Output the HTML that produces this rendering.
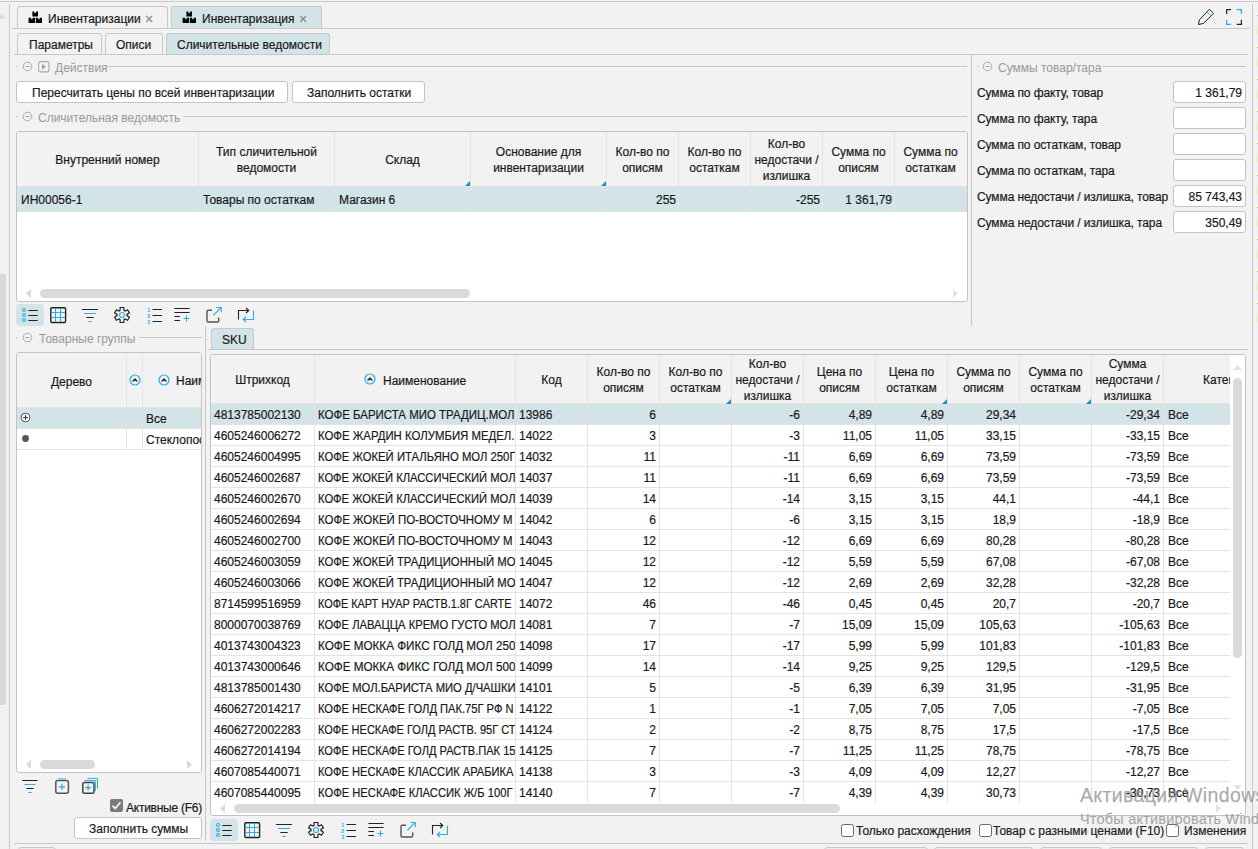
<!DOCTYPE html>
<html><head><meta charset="utf-8"><style>
html,body{margin:0;padding:0;}
body{width:1258px;height:849px;overflow:hidden;position:relative;background:#f2f2f2;font:12px/14px "Liberation Sans",sans-serif;color:#1a1a1a;-webkit-text-stroke:0.2px currentColor;}
body>div,body>span,body>svg{position:absolute;box-sizing:border-box;}
span{white-space:nowrap;}
svg{overflow:visible}
</style></head><body>
<div style="left:0px;top:1px;width:1258px;height:1px;background:#c8c8c8"></div>
<div style="left:9px;top:4px;width:1px;height:845px;background:#c8c8c8"></div>
<div style="left:1252px;top:4px;width:1px;height:845px;background:#c8c8c8"></div>
<div style="left:0px;top:274px;width:6px;height:431px;background:#d9d9d9;border-radius:0 3px 3px 0"></div>
<svg style="left:0;top:13px" width="7" height="7"><path d="M-3 5.8 L1.5 1 L6 5.8 Z" fill="#d9d9d9"/></svg>
<div style="left:1257px;top:15px;width:1px;height:1px;background:#f0a050"></div>
<div style="left:1257px;top:26px;width:1px;height:9px;background:#f4f0b0"></div>
<div style="left:1257px;top:47px;width:1px;height:1px;background:#f0a050"></div>
<div style="left:1257px;top:58px;width:1px;height:9px;background:#f4f0b0"></div>
<div style="left:1257px;top:79px;width:1px;height:1px;background:#f0a050"></div>
<div style="left:1257px;top:90px;width:1px;height:9px;background:#f4f0b0"></div>
<div style="left:1257px;top:111px;width:1px;height:1px;background:#f0a050"></div>
<div style="left:1257px;top:122px;width:1px;height:9px;background:#f4f0b0"></div>
<div style="left:1257px;top:143px;width:1px;height:1px;background:#f0a050"></div>
<div style="left:1257px;top:154px;width:1px;height:9px;background:#f4f0b0"></div>
<div style="left:1257px;top:175px;width:1px;height:1px;background:#f0a050"></div>
<div style="left:1257px;top:186px;width:1px;height:9px;background:#f4f0b0"></div>
<div style="left:1257px;top:207px;width:1px;height:1px;background:#f0a050"></div>
<div style="left:1257px;top:218px;width:1px;height:9px;background:#f4f0b0"></div>
<div style="left:1257px;top:239px;width:1px;height:1px;background:#f0a050"></div>
<div style="left:1257px;top:250px;width:1px;height:9px;background:#f4f0b0"></div>
<div style="left:1257px;top:271px;width:1px;height:1px;background:#f0a050"></div>
<div style="left:1257px;top:282px;width:1px;height:9px;background:#f4f0b0"></div>
<div style="left:1257px;top:303px;width:1px;height:1px;background:#f0a050"></div>
<div style="left:1257px;top:314px;width:1px;height:9px;background:#f4f0b0"></div>
<div style="left:17px;top:6px;width:151px;height:23px;background:#f2f2f2;border:1px solid #c8c8c8;border-bottom:none;border-radius:3px 3px 0 0"></div>
<div style="left:171px;top:6px;width:151px;height:23px;background:#d3e4e8;border:1px solid #c8c8c8;border-bottom:none;border-radius:3px 3px 0 0"></div>
<div style="left:12px;top:28px;width:1238px;height:1px;background:#c8c8c8"></div>
<div style="left:28px;top:11px"><svg width="15" height="13" viewBox="0 0 15 13"><path d="M4.4 0.6 H6.4 V2.1 H8.0 V0.6 H10 V5.4 H4.4 Z M0.6 6.8 H3.1 V8.3 H4.6 V6.8 H7.1 V12 H0.6 Z M7.9 6.8 H10.2 V8.3 H11.7 V6.8 H14 V12 H7.9 Z" fill="#000"/></svg></div>
<span style="left:48px;top:12px;color:#1a1a1a">Инвентаризации</span>
<span style="left:145px;top:12px;color:#888;font-size:14px">×</span>
<div style="left:182px;top:11px"><svg width="15" height="13" viewBox="0 0 15 13"><path d="M4.4 0.6 H6.4 V2.1 H8.0 V0.6 H10 V5.4 H4.4 Z M0.6 6.8 H3.1 V8.3 H4.6 V6.8 H7.1 V12 H0.6 Z M7.9 6.8 H10.2 V8.3 H11.7 V6.8 H14 V12 H7.9 Z" fill="#000"/></svg></div>
<span style="left:202px;top:12px;color:#1a1a1a">Инвентаризация</span>
<span style="left:299px;top:12px;color:#888;font-size:14px">×</span>
<svg style="left:1197px;top:8px" width="18" height="18" viewBox="0 0 18 18"><path d="M1.3 16.6 L2.6 11.6 L12.4 1.3 L16.6 5.4 L6.6 15.3 Z" fill="none" stroke="#222" stroke-width="1"/><path d="M10 3.6 L14.1 7.8" stroke="#29aee6" stroke-width="1"/></svg>
<svg style="left:1225px;top:8px" width="18" height="18" viewBox="0 0 18 18"><path d="M1.6 6 V1.6 H6" fill="none" stroke="#222" stroke-width="1.2"/><path d="M11.8 1.6 H16.4 V6" fill="none" stroke="#29aee6" stroke-width="1.2"/><path d="M1.6 11.8 V16.4 H6" fill="none" stroke="#29aee6" stroke-width="1.2"/><path d="M11.8 16.4 H16.4 V11.8" fill="none" stroke="#222" stroke-width="1.2"/></svg>
<div style="left:17px;top:33px;width:85px;height:22px;background:#f2f2f2;border:1px solid #c8c8c8;border-bottom:none;border-radius:3px 3px 0 0"></div>
<div style="left:105px;top:33px;width:58px;height:22px;background:#f2f2f2;border:1px solid #c8c8c8;border-bottom:none;border-radius:3px 3px 0 0"></div>
<div style="left:166px;top:33px;width:164px;height:22px;background:#d3e4e8;border:1px solid #c8c8c8;border-bottom:none;border-radius:3px 3px 0 0"></div>
<div style="left:14px;top:54px;width:1234px;height:1px;background:#c8c8c8"></div>
<span style="left:29px;top:38px;color:#1a1a1a">Параметры</span>
<span style="left:116px;top:38px;color:#1a1a1a">Описи</span>
<span style="left:177px;top:38px;color:#1a1a1a">Сличительные ведомости</span>
<div style="left:16px;top:66px;width:2px;height:1px;background:#c8c8c8"></div>
<svg style="left:22px;top:62px" width="11" height="11" viewBox="0 0 11 11"><circle cx="5.5" cy="4.5" r="4.3" fill="none" stroke="#aaaaaa" stroke-width="1"/><path d="M3.3 4.5 H7.7" stroke="#aaaaaa" stroke-width="1"/></svg>
<svg style="left:38px;top:61px" width="12" height="12" viewBox="0 0 12 12"><rect x="0.6" y="0.6" width="10.3" height="10.3" rx="1.5" fill="none" stroke="#a8a8a8" stroke-width="1.1"/><path d="M4 3 L8 5.75 L4 8.5 Z" fill="#a0a0a0"/></svg>
<span style="left:55px;top:61px;color:#9b9b9b;-webkit-text-stroke:0.05px">Действия</span>
<div style="left:108px;top:66px;width:859px;height:1px;background:#c8c8c8"></div>
<div style="left:16px;top:81px;width:272px;height:22px;background:#fff;border:1px solid #c3c3c3;border-radius:3px"></div>
<span style="left:32px;top:86px;color:#1a1a1a">Пересчитать цены по всей инвентаризации</span>
<div style="left:292px;top:81px;width:133px;height:22px;background:#fff;border:1px solid #c3c3c3;border-radius:3px"></div>
<span style="left:307px;top:86px;color:#1a1a1a">Заполнить остатки</span>
<div style="left:16px;top:116px;width:2px;height:1px;background:#c8c8c8"></div>
<svg style="left:22px;top:112px" width="11" height="11" viewBox="0 0 11 11"><circle cx="5.5" cy="4.5" r="4.3" fill="none" stroke="#aaaaaa" stroke-width="1"/><path d="M3.3 4.5 H7.7" stroke="#aaaaaa" stroke-width="1"/></svg>
<span style="left:38px;top:111px;color:#9b9b9b;-webkit-text-stroke:0.05px">Сличительная ведомость</span>
<div style="left:183px;top:116px;width:784px;height:1px;background:#c8c8c8"></div>
<div style="left:16px;top:131px;width:952px;height:171px;background:#fff;border:1px solid #c3c3c3;border-radius:3px"></div>
<div style="left:17px;top:132px;width:950px;height:54px;background:#f2f2f2"></div>
<div style="left:17px;top:187px;width:950px;height:24px;background:#d3e4e8"></div>
<div style="left:17px;top:186px;width:950px;height:1px;background:#e3e3e3"></div>
<div style="left:17px;top:211px;width:950px;height:1px;background:#e3e3e3"></div>
<div style="left:198px;top:132px;width:1px;height:79px;background:#e3e3e3"></div>
<div style="left:334px;top:132px;width:1px;height:79px;background:#e3e3e3"></div>
<div style="left:470px;top:132px;width:1px;height:79px;background:#e3e3e3"></div>
<div style="left:606px;top:132px;width:1px;height:79px;background:#e3e3e3"></div>
<div style="left:678px;top:132px;width:1px;height:79px;background:#e3e3e3"></div>
<div style="left:750px;top:132px;width:1px;height:79px;background:#e3e3e3"></div>
<div style="left:822px;top:132px;width:1px;height:79px;background:#e3e3e3"></div>
<div style="left:894px;top:132px;width:1px;height:79px;background:#e3e3e3"></div>
<span style="left:16.5px;top:153px;width:182px;text-align:center;color:#1a1a1a">Внутренний номер</span>
<span style="left:198.5px;top:145px;width:136px;text-align:center;color:#1a1a1a">Тип сличительной</span>
<span style="left:198.5px;top:161px;width:136px;text-align:center;color:#1a1a1a">ведомости</span>
<span style="left:334.5px;top:153px;width:136px;text-align:center;color:#1a1a1a">Склад</span>
<span style="left:470.5px;top:145px;width:136px;text-align:center;color:#1a1a1a">Основание для</span>
<span style="left:470.5px;top:161px;width:136px;text-align:center;color:#1a1a1a">инвентаризации</span>
<span style="left:606.5px;top:145px;width:72px;text-align:center;color:#1a1a1a">Кол-во по</span>
<span style="left:606.5px;top:161px;width:72px;text-align:center;color:#1a1a1a">описям</span>
<span style="left:678.5px;top:145px;width:72px;text-align:center;color:#1a1a1a">Кол-во по</span>
<span style="left:678.5px;top:161px;width:72px;text-align:center;color:#1a1a1a">остаткам</span>
<span style="left:750.5px;top:137px;width:72px;text-align:center;color:#1a1a1a">Кол-во</span>
<span style="left:750.5px;top:153px;width:72px;text-align:center;color:#1a1a1a">недостачи /</span>
<span style="left:750.5px;top:169px;width:72px;text-align:center;color:#1a1a1a">излишка</span>
<span style="left:822.5px;top:145px;width:72px;text-align:center;color:#1a1a1a">Сумма по</span>
<span style="left:822.5px;top:161px;width:72px;text-align:center;color:#1a1a1a">описям</span>
<span style="left:894.5px;top:145px;width:72px;text-align:center;color:#1a1a1a">Сумма по</span>
<span style="left:894.5px;top:161px;width:72px;text-align:center;color:#1a1a1a">остаткам</span>
<svg style="left:465px;top:181px" width="5" height="5"><path d="M5 0 V5 H0 Z" fill="#1f8fc7"/></svg>
<svg style="left:601px;top:181px" width="5" height="5"><path d="M5 0 V5 H0 Z" fill="#1f8fc7"/></svg>
<span style="left:21px;top:193px;color:#1a1a1a">ИН00056-1</span>
<span style="left:203px;top:193px;color:#1a1a1a">Товары по остаткам</span>
<span style="left:339px;top:193px;color:#1a1a1a">Магазин 6</span>
<span style="right:582px;top:193px;color:#1a1a1a">255</span>
<span style="right:438px;top:193px;color:#1a1a1a">-255</span>
<span style="right:366px;top:193px;color:#1a1a1a">1 361,79</span>
<div style="left:40px;top:289px;width:430px;height:9px;background:#dadada;border-radius:4.5px"></div>
<svg style="left:26px;top:289px" width="6" height="9"><path d="M5 0 V9 L0 4.5 Z" fill="#d9d9d9"/></svg>
<svg style="left:953px;top:289px" width="6" height="9"><path d="M0 0 V9 L5 4.5 Z" fill="#e3e3e3"/></svg>
<div style="left:971px;top:54px;width:1px;height:272px;background:#c8c8c8"></div>
<div style="left:977px;top:66px;width:2px;height:1px;background:#c8c8c8"></div>
<svg style="left:982px;top:62px" width="11" height="11" viewBox="0 0 11 11"><circle cx="5.5" cy="4.5" r="4.3" fill="none" stroke="#aaaaaa" stroke-width="1"/><path d="M3.3 4.5 H7.7" stroke="#aaaaaa" stroke-width="1"/></svg>
<span style="left:998px;top:61px;color:#9b9b9b;-webkit-text-stroke:0.05px">Суммы товар/тара</span>
<div style="left:1102px;top:66px;width:144px;height:1px;background:#c8c8c8"></div>
<span style="left:977px;top:86px;color:#1a1a1a;letter-spacing:-0.1px">Сумма по факту, товар</span>
<div style="left:1173px;top:81px;width:73px;height:22px;background:#fff;border:1px solid #c3c3c3;border-radius:3px"></div>
<span style="right:16px;top:86px;color:#1a1a1a">1 361,79</span>
<span style="left:977px;top:112px;color:#1a1a1a;letter-spacing:-0.1px">Сумма по факту, тара</span>
<div style="left:1173px;top:107px;width:73px;height:22px;background:#fff;border:1px solid #c3c3c3;border-radius:3px"></div>
<span style="left:977px;top:138px;color:#1a1a1a;letter-spacing:-0.1px">Сумма по остаткам, товар</span>
<div style="left:1173px;top:133px;width:73px;height:22px;background:#fff;border:1px solid #c3c3c3;border-radius:3px"></div>
<span style="left:977px;top:164px;color:#1a1a1a;letter-spacing:-0.1px">Сумма по остаткам, тара</span>
<div style="left:1173px;top:159px;width:73px;height:22px;background:#fff;border:1px solid #c3c3c3;border-radius:3px"></div>
<span style="left:977px;top:190px;color:#1a1a1a;letter-spacing:-0.1px">Сумма недостачи / излишка, товар</span>
<div style="left:1173px;top:185px;width:73px;height:22px;background:#fff;border:1px solid #c3c3c3;border-radius:3px"></div>
<span style="right:16px;top:190px;color:#1a1a1a">85 743,43</span>
<span style="left:977px;top:216px;color:#1a1a1a;letter-spacing:-0.1px">Сумма недостачи / излишка, тара</span>
<div style="left:1173px;top:211px;width:73px;height:22px;background:#fff;border:1px solid #c3c3c3;border-radius:3px"></div>
<span style="right:16px;top:216px;color:#1a1a1a">350,49</span>
<div style="left:16px;top:304px;width:28px;height:22px;background:#d3e4e8;border-radius:4px"></div>
<svg style="left:16px;top:304px" width="250" height="22" viewBox="0 0 250 22"><circle cx="8" cy="6" r="1.5" fill="none" stroke="#29aee6" stroke-width="1.1"/><circle cx="8" cy="11" r="1.5" fill="none" stroke="#29aee6" stroke-width="1.1"/><circle cx="8" cy="16" r="1.5" fill="none" stroke="#29aee6" stroke-width="1.1"/><path d="M12.3 6.5 H21.7 M12.3 11.5 H21.7 M12.3 16.5 H21.7" stroke="#222" stroke-width="1.1"/><rect x="34.8" y="3.7" width="14.8" height="14.8" rx="1" fill="none" stroke="#222" stroke-width="1.4"/><path d="M39.5 4.3 V18 M44.5 4.3 V18 M35.3 8.5 H49 M35.3 13.5 H49" stroke="#29aee6" stroke-width="1"/><path d="M66 5.5 H82" stroke="#222" stroke-width="1"/><path d="M68 9.5 H80" stroke="#29aee6" stroke-width="1"/><path d="M70.3 13.5 H77.7" stroke="#222" stroke-width="1"/><path d="M72.4 17.5 H75.8" stroke="#29aee6" stroke-width="1"/><g transform="translate(106 11)"><path d="M-1.95 -4.61 L-1.83 -7.48 L1.83 -7.48 L1.95 -4.61 L3.01 -3.99 L5.56 -5.32 L7.39 -2.15 L4.96 -0.62 L4.96 0.62 L7.39 2.15 L5.56 5.32 L3.01 3.99 L1.95 4.61 L1.83 7.48 L-1.83 7.48 L-1.95 4.61 L-3.01 3.99 L-5.56 5.32 L-7.39 2.15 L-4.96 0.62 L-4.96 -0.62 L-7.39 -2.15 L-5.56 -5.32 L-3.01 -3.99 Z" fill="none" stroke="#222" stroke-width="1.2" stroke-linejoin="miter"/><circle r="2.5" fill="none" stroke="#29aee6" stroke-width="1.2"/></g><text x="131.2" y="7.8" font-size="5.2" font-weight="bold" fill="#29aee6" stroke="none" font-family="Liberation Sans">1</text><text x="131.2" y="13.8" font-size="5.2" font-weight="bold" fill="#29aee6" stroke="none" font-family="Liberation Sans">2</text><text x="131.2" y="19.8" font-size="5.2" font-weight="bold" fill="#29aee6" stroke="none" font-family="Liberation Sans">3</text><path d="M136.5 5.5 H146 M136.5 11.5 H146 M136.5 17.5 H146" stroke="#222" stroke-width="1"/><path d="M158.4 4.5 H173.6 M158.4 8.5 H173.6 M158.4 12.5 H164 M158.4 16.5 H164" stroke="#222" stroke-width="1"/><path d="M167.5 14.5 H173.5 M170.5 11.5 V17.5" stroke="#29aee6" stroke-width="1.1"/><path d="M196 6.3 H192.2 Q191 6.3 191 7.5 V16.8 Q191 18 192.2 18 H201.5 Q202.7 18 202.7 16.8 V13.5" fill="none" stroke="#555" stroke-width="1.4"/><path d="M197.3 11.3 L205 3.6 M200.5 3.5 H205.3 V8.3" fill="none" stroke="#29aee6" stroke-width="1.2"/><path d="M222.5 15.5 V6.5 H232.5" fill="none" stroke="#222" stroke-width="1.1"/><path d="M230 4 L232.8 6.5 L230 9" fill="none" stroke="#222" stroke-width="1.1"/><path d="M237.5 6.5 V15.5 H227.5" fill="none" stroke="#29aee6" stroke-width="1.1"/><path d="M230 13 L227.2 15.5 L230 18" fill="none" stroke="#29aee6" stroke-width="1.1"/></svg>
<div style="left:210px;top:819px;width:28px;height:22px;background:#d3e4e8;border-radius:4px"></div>
<svg style="left:210px;top:819px" width="250" height="22" viewBox="0 0 250 22"><circle cx="8" cy="6" r="1.5" fill="none" stroke="#29aee6" stroke-width="1.1"/><circle cx="8" cy="11" r="1.5" fill="none" stroke="#29aee6" stroke-width="1.1"/><circle cx="8" cy="16" r="1.5" fill="none" stroke="#29aee6" stroke-width="1.1"/><path d="M12.3 6.5 H21.7 M12.3 11.5 H21.7 M12.3 16.5 H21.7" stroke="#222" stroke-width="1.1"/><rect x="34.8" y="3.7" width="14.8" height="14.8" rx="1" fill="none" stroke="#222" stroke-width="1.4"/><path d="M39.5 4.3 V18 M44.5 4.3 V18 M35.3 8.5 H49 M35.3 13.5 H49" stroke="#29aee6" stroke-width="1"/><path d="M66 5.5 H82" stroke="#222" stroke-width="1"/><path d="M68 9.5 H80" stroke="#29aee6" stroke-width="1"/><path d="M70.3 13.5 H77.7" stroke="#222" stroke-width="1"/><path d="M72.4 17.5 H75.8" stroke="#29aee6" stroke-width="1"/><g transform="translate(106 11)"><path d="M-1.95 -4.61 L-1.83 -7.48 L1.83 -7.48 L1.95 -4.61 L3.01 -3.99 L5.56 -5.32 L7.39 -2.15 L4.96 -0.62 L4.96 0.62 L7.39 2.15 L5.56 5.32 L3.01 3.99 L1.95 4.61 L1.83 7.48 L-1.83 7.48 L-1.95 4.61 L-3.01 3.99 L-5.56 5.32 L-7.39 2.15 L-4.96 0.62 L-4.96 -0.62 L-7.39 -2.15 L-5.56 -5.32 L-3.01 -3.99 Z" fill="none" stroke="#222" stroke-width="1.2" stroke-linejoin="miter"/><circle r="2.5" fill="none" stroke="#29aee6" stroke-width="1.2"/></g><text x="131.2" y="7.8" font-size="5.2" font-weight="bold" fill="#29aee6" stroke="none" font-family="Liberation Sans">1</text><text x="131.2" y="13.8" font-size="5.2" font-weight="bold" fill="#29aee6" stroke="none" font-family="Liberation Sans">2</text><text x="131.2" y="19.8" font-size="5.2" font-weight="bold" fill="#29aee6" stroke="none" font-family="Liberation Sans">3</text><path d="M136.5 5.5 H146 M136.5 11.5 H146 M136.5 17.5 H146" stroke="#222" stroke-width="1"/><path d="M158.4 4.5 H173.6 M158.4 8.5 H173.6 M158.4 12.5 H164 M158.4 16.5 H164" stroke="#222" stroke-width="1"/><path d="M167.5 14.5 H173.5 M170.5 11.5 V17.5" stroke="#29aee6" stroke-width="1.1"/><path d="M196 6.3 H192.2 Q191 6.3 191 7.5 V16.8 Q191 18 192.2 18 H201.5 Q202.7 18 202.7 16.8 V13.5" fill="none" stroke="#555" stroke-width="1.4"/><path d="M197.3 11.3 L205 3.6 M200.5 3.5 H205.3 V8.3" fill="none" stroke="#29aee6" stroke-width="1.2"/><path d="M222.5 15.5 V6.5 H232.5" fill="none" stroke="#222" stroke-width="1.1"/><path d="M230 4 L232.8 6.5 L230 9" fill="none" stroke="#222" stroke-width="1.1"/><path d="M237.5 6.5 V15.5 H227.5" fill="none" stroke="#29aee6" stroke-width="1.1"/><path d="M230 13 L227.2 15.5 L230 18" fill="none" stroke="#29aee6" stroke-width="1.1"/></svg>
<div style="left:205px;top:326px;width:1px;height:515px;background:#c8c8c8"></div>
<div style="left:16px;top:337px;width:2px;height:1px;background:#c8c8c8"></div>
<svg style="left:22px;top:333px" width="11" height="11" viewBox="0 0 11 11"><circle cx="5.5" cy="4.5" r="4.3" fill="none" stroke="#aaaaaa" stroke-width="1"/><path d="M3.3 4.5 H7.7" stroke="#aaaaaa" stroke-width="1"/></svg>
<span style="left:39px;top:332px;color:#9b9b9b;-webkit-text-stroke:0.05px">Товарные группы</span>
<div style="left:139px;top:337px;width:63px;height:1px;background:#c8c8c8"></div>
<div style="left:16px;top:352px;width:186px;height:421px;background:#fff;border:1px solid #c3c3c3;border-radius:3px"></div>
<div style="left:17px;top:353px;width:184px;height:54px;background:#f2f2f2"></div>
<div style="left:17px;top:408px;width:184px;height:20px;background:#d3e4e8"></div>
<div style="left:17px;top:407px;width:184px;height:1px;background:#e3e3e3"></div>
<div style="left:17px;top:428px;width:184px;height:1px;background:#e3e3e3"></div>
<div style="left:17px;top:449px;width:184px;height:1px;background:#e3e3e3"></div>
<div style="left:126px;top:354px;width:1px;height:95px;background:#e3e3e3"></div>
<div style="left:142px;top:354px;width:1px;height:95px;background:#e3e3e3"></div>
<span style="left:16.5px;top:375px;width:110px;text-align:center;color:#1a1a1a">Дерево</span>
<div style="left:127px;top:360px;width:14px;height:40px;overflow:hidden"><svg style="position:absolute;left:2px;top:14px" width="12" height="12" viewBox="0 0 12 12"><circle cx="6" cy="6" r="5" fill="none" stroke="#29aee6" stroke-width="1.2"/><path d="M3.6 7.4 L6 5 L8.4 7.4" fill="none" stroke="#333" stroke-width="1.4"/></svg></div>
<svg style="left:158px;top:374px" width="12" height="12" viewBox="0 0 12 12"><circle cx="6" cy="6" r="5" fill="none" stroke="#29aee6" stroke-width="1.2"/><path d="M3.6 7.4 L6 5 L8.4 7.4" fill="none" stroke="#333" stroke-width="1.4"/></svg>
<div style="left:176px;top:374px;width:25px;height:16px;overflow:hidden"><span style="position:absolute;left:0;top:0">Наименование</span></div>
<svg style="left:19px;top:411px" width="12" height="12" viewBox="0 0 12 12"><circle cx="6.5" cy="6.5" r="4.3" fill="#fff" stroke="#5a5a5a" stroke-width="1.1"/><path d="M4 6.5 H9 M6.5 4 V9" stroke="#333" stroke-width="1.1"/></svg>
<svg style="left:19px;top:432px" width="12" height="12"><circle cx="6.5" cy="6.5" r="3.4" fill="#555"/></svg>
<span style="left:146px;top:412px;color:#1a1a1a">Все</span>
<div style="left:146px;top:433px;width:55px;height:16px;overflow:hidden"><span style="position:absolute;left:0;top:0">Стеклопосуда</span></div>
<div style="left:40px;top:760px;width:55px;height:9px;background:#dadada;border-radius:4.5px"></div>
<svg style="left:26px;top:760px" width="6" height="9"><path d="M5 0 V9 L0 4.5 Z" fill="#d9d9d9"/></svg>
<svg style="left:187px;top:760px" width="6" height="9"><path d="M0 0 V9 L5 4.5 Z" fill="#d9d9d9"/></svg>
<svg style="left:16px;top:774px" width="90" height="24" viewBox="0 0 90 24"><path d="M6.3 6.5 H21.5" stroke="#222" stroke-width="1"/><path d="M8.4 10.5 H19.5" stroke="#29aee6" stroke-width="1"/><path d="M10.4 14.5 H17.5" stroke="#222" stroke-width="1"/><path d="M12.2 18.5 H15.7" stroke="#29aee6" stroke-width="1"/><rect x="39.8" y="6.6" width="12.6" height="12.6" rx="2" fill="none" stroke="#555" stroke-width="1.5"/><path d="M42.2 5 H49.7" stroke="#7fd0f2" stroke-width="2"/><path d="M42.9 12.9 H49.1 M46 9.8 V16" stroke="#29aee6" stroke-width="1.2"/><rect x="66.8" y="8.6" width="11.2" height="10.6" rx="1.5" fill="none" stroke="#444" stroke-width="1.5"/><path d="M68.7 6.6 H79.4 V17 M71.5 4.4 H81.5 V14.7" fill="none" stroke="#29aee6" stroke-width="1"/><path d="M69.1 13.6 H75.1 M72.1 10.6 V16.6" stroke="#29aee6" stroke-width="1.2"/></svg>
<div style="left:110px;top:799px;width:13px;height:13px;background:#7a7a7a;border-radius:2px"></div>
<svg style="left:110px;top:799px" width="13" height="13"><path d="M2.5 6.8 L5.2 9.5 L10.5 3.3" fill="none" stroke="#fff" stroke-width="1.6"/></svg>
<span style="left:126px;top:801px;color:#1a1a1a;letter-spacing:-0.25px">Активные (F6)</span>
<div style="left:74px;top:817px;width:128px;height:22px;background:#fff;border:1px solid #c3c3c3;border-radius:3px"></div>
<span style="left:89px;top:822px;color:#1a1a1a">Заполнить суммы</span>
<div style="left:211px;top:328px;width:43px;height:22px;background:#d3e4e8;border:1px solid #c8c8c8;border-bottom:none;border-radius:3px 3px 0 0"></div>
<div style="left:208px;top:349px;width:1040px;height:1px;background:#c8c8c8"></div>
<span style="left:222px;top:333px;color:#1a1a1a">SKU</span>
<div style="left:210px;top:354px;width:1036px;height:462px;background:#fff;border:1px solid #c3c3c3;border-radius:3px"></div>
<div style="left:211px;top:355px;width:1019px;height:49px;background:#f2f2f2"></div>
<div style="left:211px;top:404px;width:1019px;height:20px;background:#d3e4e8"></div>
<div style="left:211px;top:403px;width:1019px;height:1px;background:#e3e3e3"></div>
<div style="left:314px;top:355px;width:1px;height:448px;background:#e3e3e3"></div>
<div style="left:515px;top:355px;width:1px;height:448px;background:#e3e3e3"></div>
<div style="left:587px;top:355px;width:1px;height:448px;background:#e3e3e3"></div>
<div style="left:659px;top:355px;width:1px;height:448px;background:#e3e3e3"></div>
<div style="left:731px;top:355px;width:1px;height:448px;background:#e3e3e3"></div>
<div style="left:803px;top:355px;width:1px;height:448px;background:#e3e3e3"></div>
<div style="left:875px;top:355px;width:1px;height:448px;background:#e3e3e3"></div>
<div style="left:947px;top:355px;width:1px;height:448px;background:#e3e3e3"></div>
<div style="left:1019px;top:355px;width:1px;height:448px;background:#e3e3e3"></div>
<div style="left:1091px;top:355px;width:1px;height:448px;background:#e3e3e3"></div>
<div style="left:1163px;top:355px;width:1px;height:448px;background:#e3e3e3"></div>
<div style="left:211px;top:424px;width:1019px;height:1px;background:#e3e3e3"></div>
<div style="left:211px;top:445px;width:1019px;height:1px;background:#e3e3e3"></div>
<div style="left:211px;top:466px;width:1019px;height:1px;background:#e3e3e3"></div>
<div style="left:211px;top:487px;width:1019px;height:1px;background:#e3e3e3"></div>
<div style="left:211px;top:508px;width:1019px;height:1px;background:#e3e3e3"></div>
<div style="left:211px;top:529px;width:1019px;height:1px;background:#e3e3e3"></div>
<div style="left:211px;top:550px;width:1019px;height:1px;background:#e3e3e3"></div>
<div style="left:211px;top:571px;width:1019px;height:1px;background:#e3e3e3"></div>
<div style="left:211px;top:592px;width:1019px;height:1px;background:#e3e3e3"></div>
<div style="left:211px;top:613px;width:1019px;height:1px;background:#e3e3e3"></div>
<div style="left:211px;top:634px;width:1019px;height:1px;background:#e3e3e3"></div>
<div style="left:211px;top:655px;width:1019px;height:1px;background:#e3e3e3"></div>
<div style="left:211px;top:676px;width:1019px;height:1px;background:#e3e3e3"></div>
<div style="left:211px;top:697px;width:1019px;height:1px;background:#e3e3e3"></div>
<div style="left:211px;top:718px;width:1019px;height:1px;background:#e3e3e3"></div>
<div style="left:211px;top:739px;width:1019px;height:1px;background:#e3e3e3"></div>
<div style="left:211px;top:760px;width:1019px;height:1px;background:#e3e3e3"></div>
<div style="left:211px;top:781px;width:1019px;height:1px;background:#e3e3e3"></div>
<span style="left:210.5px;top:373px;width:104px;text-align:center;color:#1a1a1a">Штрихкод</span>
<svg style="left:363.5px;top:373px" width="12" height="12" viewBox="0 0 12 12"><circle cx="6" cy="6" r="5" fill="none" stroke="#29aee6" stroke-width="1.2"/><path d="M3.6 7.4 L6 5 L8.4 7.4" fill="none" stroke="#333" stroke-width="1.4"/></svg>
<span style="left:383px;top:374px;color:#1a1a1a">Наименование</span>
<span style="left:515.5px;top:373px;width:72px;text-align:center;color:#1a1a1a">Код</span>
<span style="left:587.5px;top:365px;width:72px;text-align:center;color:#1a1a1a">Кол-во по</span>
<span style="left:587.5px;top:381px;width:72px;text-align:center;color:#1a1a1a">описям</span>
<span style="left:659.5px;top:365px;width:72px;text-align:center;color:#1a1a1a">Кол-во по</span>
<span style="left:659.5px;top:381px;width:72px;text-align:center;color:#1a1a1a">остаткам</span>
<span style="left:731.5px;top:357px;width:72px;text-align:center;color:#1a1a1a">Кол-во</span>
<span style="left:731.5px;top:373px;width:72px;text-align:center;color:#1a1a1a">недостачи /</span>
<span style="left:731.5px;top:389px;width:72px;text-align:center;color:#1a1a1a">излишка</span>
<span style="left:803.5px;top:365px;width:72px;text-align:center;color:#1a1a1a">Цена по</span>
<span style="left:803.5px;top:381px;width:72px;text-align:center;color:#1a1a1a">описям</span>
<span style="left:875.5px;top:365px;width:72px;text-align:center;color:#1a1a1a">Цена по</span>
<span style="left:875.5px;top:381px;width:72px;text-align:center;color:#1a1a1a">остаткам</span>
<span style="left:947.5px;top:365px;width:72px;text-align:center;color:#1a1a1a">Сумма по</span>
<span style="left:947.5px;top:381px;width:72px;text-align:center;color:#1a1a1a">описям</span>
<span style="left:1019.5px;top:365px;width:72px;text-align:center;color:#1a1a1a">Сумма по</span>
<span style="left:1019.5px;top:381px;width:72px;text-align:center;color:#1a1a1a">остаткам</span>
<span style="left:1091.5px;top:357px;width:72px;text-align:center;color:#1a1a1a">Сумма</span>
<span style="left:1091.5px;top:373px;width:72px;text-align:center;color:#1a1a1a">недостачи /</span>
<span style="left:1091.5px;top:389px;width:72px;text-align:center;color:#1a1a1a">излишка</span>
<div style="left:1163px;top:373px;width:67px;height:16px;overflow:hidden"><span style="position:absolute;left:40px;top:0">Категория</span></div>
<svg style="left:726px;top:399px" width="5" height="5"><path d="M5 0 V5 H0 Z" fill="#1f8fc7"/></svg>
<svg style="left:942px;top:399px" width="5" height="5"><path d="M5 0 V5 H0 Z" fill="#1f8fc7"/></svg>
<svg style="left:1086px;top:399px" width="5" height="5"><path d="M5 0 V5 H0 Z" fill="#1f8fc7"/></svg>
<span style="left:214px;top:408px;color:#1a1a1a">4813785002130</span>
<div style="left:315px;top:408px;width:200px;height:16px;overflow:hidden"><span style="position:absolute;left:3px;top:0;transform:scaleX(0.9553);transform-origin:0 0">КОФЕ БАРИСТА МИО ТРАДИЦ.МОЛ</span></div>
<span style="left:519px;top:408px;color:#1a1a1a">13986</span>
<span style="right:602px;top:408px;color:#1a1a1a">6</span>
<span style="right:458px;top:408px;color:#1a1a1a">-6</span>
<span style="right:386px;top:408px;color:#1a1a1a">4,89</span>
<span style="right:314px;top:408px;color:#1a1a1a">4,89</span>
<span style="right:242px;top:408px;color:#1a1a1a">29,34</span>
<span style="right:98px;top:408px;color:#1a1a1a">-29,34</span>
<span style="left:1168px;top:408px;color:#1a1a1a">Все</span>
<span style="left:214px;top:429px;color:#1a1a1a">4605246006272</span>
<div style="left:315px;top:429px;width:200px;height:16px;overflow:hidden"><span style="position:absolute;left:3px;top:0;transform:scaleX(0.9489);transform-origin:0 0">КОФЕ ЖАРДИН КОЛУМБИЯ МЕДЕЛ.</span></div>
<span style="left:519px;top:429px;color:#1a1a1a">14022</span>
<span style="right:602px;top:429px;color:#1a1a1a">3</span>
<span style="right:458px;top:429px;color:#1a1a1a">-3</span>
<span style="right:386px;top:429px;color:#1a1a1a">11,05</span>
<span style="right:314px;top:429px;color:#1a1a1a">11,05</span>
<span style="right:242px;top:429px;color:#1a1a1a">33,15</span>
<span style="right:98px;top:429px;color:#1a1a1a">-33,15</span>
<span style="left:1168px;top:429px;color:#1a1a1a">Все</span>
<span style="left:214px;top:450px;color:#1a1a1a">4605246004995</span>
<div style="left:315px;top:450px;width:200px;height:16px;overflow:hidden"><span style="position:absolute;left:3px;top:0;transform:scaleX(0.9418);transform-origin:0 0">КОФЕ ЖОКЕЙ ИТАЛЬЯНО МОЛ 250Г</span></div>
<span style="left:519px;top:450px;color:#1a1a1a">14032</span>
<span style="right:602px;top:450px;color:#1a1a1a">11</span>
<span style="right:458px;top:450px;color:#1a1a1a">-11</span>
<span style="right:386px;top:450px;color:#1a1a1a">6,69</span>
<span style="right:314px;top:450px;color:#1a1a1a">6,69</span>
<span style="right:242px;top:450px;color:#1a1a1a">73,59</span>
<span style="right:98px;top:450px;color:#1a1a1a">-73,59</span>
<span style="left:1168px;top:450px;color:#1a1a1a">Все</span>
<span style="left:214px;top:471px;color:#1a1a1a">4605246002687</span>
<div style="left:315px;top:471px;width:200px;height:16px;overflow:hidden"><span style="position:absolute;left:3px;top:0;transform:scaleX(0.9332);transform-origin:0 0">КОФЕ ЖОКЕЙ КЛАССИЧЕСКИЙ МОЛ</span></div>
<span style="left:519px;top:471px;color:#1a1a1a">14037</span>
<span style="right:602px;top:471px;color:#1a1a1a">11</span>
<span style="right:458px;top:471px;color:#1a1a1a">-11</span>
<span style="right:386px;top:471px;color:#1a1a1a">6,69</span>
<span style="right:314px;top:471px;color:#1a1a1a">6,69</span>
<span style="right:242px;top:471px;color:#1a1a1a">73,59</span>
<span style="right:98px;top:471px;color:#1a1a1a">-73,59</span>
<span style="left:1168px;top:471px;color:#1a1a1a">Все</span>
<span style="left:214px;top:492px;color:#1a1a1a">4605246002670</span>
<div style="left:315px;top:492px;width:200px;height:16px;overflow:hidden"><span style="position:absolute;left:3px;top:0;transform:scaleX(0.9332);transform-origin:0 0">КОФЕ ЖОКЕЙ КЛАССИЧЕСКИЙ МОЛ</span></div>
<span style="left:519px;top:492px;color:#1a1a1a">14039</span>
<span style="right:602px;top:492px;color:#1a1a1a">14</span>
<span style="right:458px;top:492px;color:#1a1a1a">-14</span>
<span style="right:386px;top:492px;color:#1a1a1a">3,15</span>
<span style="right:314px;top:492px;color:#1a1a1a">3,15</span>
<span style="right:242px;top:492px;color:#1a1a1a">44,1</span>
<span style="right:98px;top:492px;color:#1a1a1a">-44,1</span>
<span style="left:1168px;top:492px;color:#1a1a1a">Все</span>
<span style="left:214px;top:513px;color:#1a1a1a">4605246002694</span>
<div style="left:315px;top:513px;width:200px;height:16px;overflow:hidden"><span style="position:absolute;left:3px;top:0;transform:scaleX(0.9547);transform-origin:0 0">КОФЕ ЖОКЕЙ ПО-ВОСТОЧНОМУ М</span></div>
<span style="left:519px;top:513px;color:#1a1a1a">14042</span>
<span style="right:602px;top:513px;color:#1a1a1a">6</span>
<span style="right:458px;top:513px;color:#1a1a1a">-6</span>
<span style="right:386px;top:513px;color:#1a1a1a">3,15</span>
<span style="right:314px;top:513px;color:#1a1a1a">3,15</span>
<span style="right:242px;top:513px;color:#1a1a1a">18,9</span>
<span style="right:98px;top:513px;color:#1a1a1a">-18,9</span>
<span style="left:1168px;top:513px;color:#1a1a1a">Все</span>
<span style="left:214px;top:534px;color:#1a1a1a">4605246002700</span>
<div style="left:315px;top:534px;width:200px;height:16px;overflow:hidden"><span style="position:absolute;left:3px;top:0;transform:scaleX(0.9547);transform-origin:0 0">КОФЕ ЖОКЕЙ ПО-ВОСТОЧНОМУ М</span></div>
<span style="left:519px;top:534px;color:#1a1a1a">14043</span>
<span style="right:602px;top:534px;color:#1a1a1a">12</span>
<span style="right:458px;top:534px;color:#1a1a1a">-12</span>
<span style="right:386px;top:534px;color:#1a1a1a">6,69</span>
<span style="right:314px;top:534px;color:#1a1a1a">6,69</span>
<span style="right:242px;top:534px;color:#1a1a1a">80,28</span>
<span style="right:98px;top:534px;color:#1a1a1a">-80,28</span>
<span style="left:1168px;top:534px;color:#1a1a1a">Все</span>
<span style="left:214px;top:555px;color:#1a1a1a">4605246003059</span>
<div style="left:315px;top:555px;width:200px;height:16px;overflow:hidden"><span style="position:absolute;left:3px;top:0;transform:scaleX(0.9426);transform-origin:0 0">КОФЕ ЖОКЕЙ ТРАДИЦИОННЫЙ МО</span></div>
<span style="left:519px;top:555px;color:#1a1a1a">14045</span>
<span style="right:602px;top:555px;color:#1a1a1a">12</span>
<span style="right:458px;top:555px;color:#1a1a1a">-12</span>
<span style="right:386px;top:555px;color:#1a1a1a">5,59</span>
<span style="right:314px;top:555px;color:#1a1a1a">5,59</span>
<span style="right:242px;top:555px;color:#1a1a1a">67,08</span>
<span style="right:98px;top:555px;color:#1a1a1a">-67,08</span>
<span style="left:1168px;top:555px;color:#1a1a1a">Все</span>
<span style="left:214px;top:576px;color:#1a1a1a">4605246003066</span>
<div style="left:315px;top:576px;width:200px;height:16px;overflow:hidden"><span style="position:absolute;left:3px;top:0;transform:scaleX(0.9426);transform-origin:0 0">КОФЕ ЖОКЕЙ ТРАДИЦИОННЫЙ МО</span></div>
<span style="left:519px;top:576px;color:#1a1a1a">14047</span>
<span style="right:602px;top:576px;color:#1a1a1a">12</span>
<span style="right:458px;top:576px;color:#1a1a1a">-12</span>
<span style="right:386px;top:576px;color:#1a1a1a">2,69</span>
<span style="right:314px;top:576px;color:#1a1a1a">2,69</span>
<span style="right:242px;top:576px;color:#1a1a1a">32,28</span>
<span style="right:98px;top:576px;color:#1a1a1a">-32,28</span>
<span style="left:1168px;top:576px;color:#1a1a1a">Все</span>
<span style="left:214px;top:597px;color:#1a1a1a">8714599516959</span>
<div style="left:315px;top:597px;width:200px;height:16px;overflow:hidden"><span style="position:absolute;left:3px;top:0;transform:scaleX(0.9065);transform-origin:0 0">КОФЕ КАРТ НУАР РАСТВ.1.8Г CARTE</span></div>
<span style="left:519px;top:597px;color:#1a1a1a">14072</span>
<span style="right:602px;top:597px;color:#1a1a1a">46</span>
<span style="right:458px;top:597px;color:#1a1a1a">-46</span>
<span style="right:386px;top:597px;color:#1a1a1a">0,45</span>
<span style="right:314px;top:597px;color:#1a1a1a">0,45</span>
<span style="right:242px;top:597px;color:#1a1a1a">20,7</span>
<span style="right:98px;top:597px;color:#1a1a1a">-20,7</span>
<span style="left:1168px;top:597px;color:#1a1a1a">Все</span>
<span style="left:214px;top:618px;color:#1a1a1a">8000070038769</span>
<div style="left:315px;top:618px;width:200px;height:16px;overflow:hidden"><span style="position:absolute;left:3px;top:0;transform:scaleX(0.9324);transform-origin:0 0">КОФЕ ЛАВАЦЦА КРЕМО ГУСТО МОЛ</span></div>
<span style="left:519px;top:618px;color:#1a1a1a">14081</span>
<span style="right:602px;top:618px;color:#1a1a1a">7</span>
<span style="right:458px;top:618px;color:#1a1a1a">-7</span>
<span style="right:386px;top:618px;color:#1a1a1a">15,09</span>
<span style="right:314px;top:618px;color:#1a1a1a">15,09</span>
<span style="right:242px;top:618px;color:#1a1a1a">105,63</span>
<span style="right:98px;top:618px;color:#1a1a1a">-105,63</span>
<span style="left:1168px;top:618px;color:#1a1a1a">Все</span>
<span style="left:214px;top:639px;color:#1a1a1a">4013743004323</span>
<div style="left:315px;top:639px;width:200px;height:16px;overflow:hidden"><span style="position:absolute;left:3px;top:0;transform:scaleX(0.9744);transform-origin:0 0">КОФЕ МОККА ФИКС ГОЛД МОЛ 250</span></div>
<span style="left:519px;top:639px;color:#1a1a1a">14098</span>
<span style="right:602px;top:639px;color:#1a1a1a">17</span>
<span style="right:458px;top:639px;color:#1a1a1a">-17</span>
<span style="right:386px;top:639px;color:#1a1a1a">5,99</span>
<span style="right:314px;top:639px;color:#1a1a1a">5,99</span>
<span style="right:242px;top:639px;color:#1a1a1a">101,83</span>
<span style="right:98px;top:639px;color:#1a1a1a">-101,83</span>
<span style="left:1168px;top:639px;color:#1a1a1a">Все</span>
<span style="left:214px;top:660px;color:#1a1a1a">4013743000646</span>
<div style="left:315px;top:660px;width:200px;height:16px;overflow:hidden"><span style="position:absolute;left:3px;top:0;transform:scaleX(0.9744);transform-origin:0 0">КОФЕ МОККА ФИКС ГОЛД МОЛ 500</span></div>
<span style="left:519px;top:660px;color:#1a1a1a">14099</span>
<span style="right:602px;top:660px;color:#1a1a1a">14</span>
<span style="right:458px;top:660px;color:#1a1a1a">-14</span>
<span style="right:386px;top:660px;color:#1a1a1a">9,25</span>
<span style="right:314px;top:660px;color:#1a1a1a">9,25</span>
<span style="right:242px;top:660px;color:#1a1a1a">129,5</span>
<span style="right:98px;top:660px;color:#1a1a1a">-129,5</span>
<span style="left:1168px;top:660px;color:#1a1a1a">Все</span>
<span style="left:214px;top:681px;color:#1a1a1a">4813785001430</span>
<div style="left:315px;top:681px;width:200px;height:16px;overflow:hidden"><span style="position:absolute;left:3px;top:0;transform:scaleX(0.9351);transform-origin:0 0">КОФЕ МОЛ.БАРИСТА МИО Д/ЧАШКИ</span></div>
<span style="left:519px;top:681px;color:#1a1a1a">14101</span>
<span style="right:602px;top:681px;color:#1a1a1a">5</span>
<span style="right:458px;top:681px;color:#1a1a1a">-5</span>
<span style="right:386px;top:681px;color:#1a1a1a">6,39</span>
<span style="right:314px;top:681px;color:#1a1a1a">6,39</span>
<span style="right:242px;top:681px;color:#1a1a1a">31,95</span>
<span style="right:98px;top:681px;color:#1a1a1a">-31,95</span>
<span style="left:1168px;top:681px;color:#1a1a1a">Все</span>
<span style="left:214px;top:702px;color:#1a1a1a">4606272014217</span>
<div style="left:315px;top:702px;width:200px;height:16px;overflow:hidden"><span style="position:absolute;left:3px;top:0;transform:scaleX(0.9286);transform-origin:0 0">КОФЕ НЕСКАФЕ ГОЛД ПАК.75Г РФ N</span></div>
<span style="left:519px;top:702px;color:#1a1a1a">14122</span>
<span style="right:602px;top:702px;color:#1a1a1a">1</span>
<span style="right:458px;top:702px;color:#1a1a1a">-1</span>
<span style="right:386px;top:702px;color:#1a1a1a">7,05</span>
<span style="right:314px;top:702px;color:#1a1a1a">7,05</span>
<span style="right:242px;top:702px;color:#1a1a1a">7,05</span>
<span style="right:98px;top:702px;color:#1a1a1a">-7,05</span>
<span style="left:1168px;top:702px;color:#1a1a1a">Все</span>
<span style="left:214px;top:723px;color:#1a1a1a">4606272002283</span>
<div style="left:315px;top:723px;width:200px;height:16px;overflow:hidden"><span style="position:absolute;left:3px;top:0;transform:scaleX(0.9169);transform-origin:0 0">КОФЕ НЕСКАФЕ ГОЛД РАСТВ. 95Г СТ</span></div>
<span style="left:519px;top:723px;color:#1a1a1a">14124</span>
<span style="right:602px;top:723px;color:#1a1a1a">2</span>
<span style="right:458px;top:723px;color:#1a1a1a">-2</span>
<span style="right:386px;top:723px;color:#1a1a1a">8,75</span>
<span style="right:314px;top:723px;color:#1a1a1a">8,75</span>
<span style="right:242px;top:723px;color:#1a1a1a">17,5</span>
<span style="right:98px;top:723px;color:#1a1a1a">-17,5</span>
<span style="left:1168px;top:723px;color:#1a1a1a">Все</span>
<span style="left:214px;top:744px;color:#1a1a1a">4606272014194</span>
<div style="left:315px;top:744px;width:200px;height:16px;overflow:hidden"><span style="position:absolute;left:3px;top:0;transform:scaleX(0.9247);transform-origin:0 0">КОФЕ НЕСКАФЕ ГОЛД РАСТВ.ПАК 15</span></div>
<span style="left:519px;top:744px;color:#1a1a1a">14125</span>
<span style="right:602px;top:744px;color:#1a1a1a">7</span>
<span style="right:458px;top:744px;color:#1a1a1a">-7</span>
<span style="right:386px;top:744px;color:#1a1a1a">11,25</span>
<span style="right:314px;top:744px;color:#1a1a1a">11,25</span>
<span style="right:242px;top:744px;color:#1a1a1a">78,75</span>
<span style="right:98px;top:744px;color:#1a1a1a">-78,75</span>
<span style="left:1168px;top:744px;color:#1a1a1a">Все</span>
<span style="left:214px;top:765px;color:#1a1a1a">4607085440071</span>
<div style="left:315px;top:765px;width:200px;height:16px;overflow:hidden"><span style="position:absolute;left:3px;top:0;transform:scaleX(0.9282);transform-origin:0 0">КОФЕ НЕСКАФЕ КЛАССИК АРАБИКА</span></div>
<span style="left:519px;top:765px;color:#1a1a1a">14138</span>
<span style="right:602px;top:765px;color:#1a1a1a">3</span>
<span style="right:458px;top:765px;color:#1a1a1a">-3</span>
<span style="right:386px;top:765px;color:#1a1a1a">4,09</span>
<span style="right:314px;top:765px;color:#1a1a1a">4,09</span>
<span style="right:242px;top:765px;color:#1a1a1a">12,27</span>
<span style="right:98px;top:765px;color:#1a1a1a">-12,27</span>
<span style="left:1168px;top:765px;color:#1a1a1a">Все</span>
<span style="left:214px;top:786px;color:#1a1a1a">4607085440095</span>
<div style="left:315px;top:786px;width:200px;height:16px;overflow:hidden"><span style="position:absolute;left:3px;top:0;transform:scaleX(0.9348);transform-origin:0 0">КОФЕ НЕСКАФЕ КЛАССИК Ж/Б 100Г</span></div>
<span style="left:519px;top:786px;color:#1a1a1a">14140</span>
<span style="right:602px;top:786px;color:#1a1a1a">7</span>
<span style="right:458px;top:786px;color:#1a1a1a">-7</span>
<span style="right:386px;top:786px;color:#1a1a1a">4,39</span>
<span style="right:314px;top:786px;color:#1a1a1a">4,39</span>
<span style="right:242px;top:786px;color:#1a1a1a">30,73</span>
<span style="right:98px;top:786px;color:#1a1a1a">-30,73</span>
<span style="left:1168px;top:786px;color:#1a1a1a">Все</span>
<div style="left:211px;top:803px;width:1034px;height:12px;background:#fff;border-radius:0 0 3px 3px"></div>
<div style="left:234px;top:804px;width:606px;height:9px;background:#dadada;border-radius:4.5px"></div>
<svg style="left:220px;top:804px" width="6" height="9"><path d="M5 0 V9 L0 4.5 Z" fill="#d9d9d9"/></svg>
<svg style="left:1216px;top:804px" width="6" height="9"><path d="M0 0 V9 L5 4.5 Z" fill="#e3e3e3"/></svg>
<div style="left:1230px;top:355px;width:15px;height:448px;background:#fff"></div>
<div style="left:1233px;top:378px;width:9px;height:280px;background:#dadada;border-radius:4.5px"></div>
<svg style="left:1233px;top:365px" width="9" height="6"><path d="M0 5 H9 L4.5 0 Z" fill="#e3e3e3"/></svg>
<svg style="left:1233px;top:785px" width="9" height="6"><path d="M0 0 H9 L4.5 5 Z" fill="#e3e3e3"/></svg>
<div style="left:841px;top:824px;width:13px;height:13px;background:#fff;border:1px solid #6a6a6a;border-radius:2.5px"></div>
<span style="left:856px;top:824px;color:#222">Только расхождения</span>
<div style="left:979px;top:824px;width:13px;height:13px;background:#fff;border:1px solid #6a6a6a;border-radius:2.5px"></div>
<span style="left:993px;top:824px;color:#222">Товар с разными ценами (F10)</span>
<div style="left:1166px;top:824px;width:13px;height:13px;background:#fff;border:1px solid #6a6a6a;border-radius:2.5px"></div>
<span style="left:1184px;top:824px;color:#222">Изменения</span>
<div style="left:14px;top:843px;width:1234px;height:1px;background:#c8c8c8"></div>
<div style="left:18px;top:847px;width:38px;height:10px;background:#ececec;border:1px solid #c8c8c8;border-radius:3px"></div>
<div style="left:824px;top:847px;width:104px;height:10px;background:#ececec;border:1px solid #c8c8c8;border-radius:3px"></div>
<div style="left:934px;top:847px;width:99px;height:10px;background:#ececec;border:1px solid #c8c8c8;border-radius:3px"></div>
<div style="left:1040px;top:847px;width:62px;height:10px;background:#ececec;border:1px solid #c8c8c8;border-radius:3px"></div>
<div style="left:1109px;top:847px;width:89px;height:10px;background:#ececec;border:1px solid #c8c8c8;border-radius:3px"></div>
<div style="left:1205px;top:847px;width:39px;height:10px;background:#ececec;border:1px solid #c8c8c8;border-radius:3px"></div>
<span style="left:1080px;top:783px;font-size:19.5px;line-height:24px;letter-spacing:0.35px;-webkit-text-stroke:0.25px rgba(140,140,140,0.6);color:rgba(140,140,140,0.72)">Активация Windows</span>
<span style="left:1080px;top:810px;font-size:14.5px;line-height:18px;letter-spacing:0.2px;-webkit-text-stroke:0.2px rgba(140,140,140,0.6);color:rgba(140,140,140,0.72)">Чтобы активировать Windows</span>
</body></html>
